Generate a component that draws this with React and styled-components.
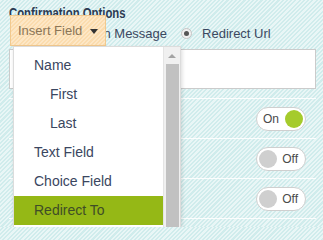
import styled, { createGlobalStyle } from "styled-components";

const GlobalStyle = createGlobalStyle`
  *, *::before, *::after {
    box-sizing: border-box;
  }
  html, body {
    margin: 0;
    padding: 0;
    height: 227px;
    overflow: hidden;
  }
  body {
    font-family: "Liberation Sans", Arial, sans-serif;
    background: repeating-linear-gradient(
      135deg,
      #e9f6f6 0px,
      #e9f6f6 1.5px,
      #d0ecec 1.5px,
      #d0ecec 3px
    );
  }
`;

const Panel = styled.div`
  position: relative;
  width: 323px;
  height: 227px;
  padding: 4px 7px 0 9px;
  overflow: hidden;
`;

const Title = styled.div`
  font-family: "Liberation Sans", Arial, sans-serif;
  font-weight: bold;
  font-size: 14px;
  line-height: 18px;
  height: 14px;
  color: #2b3b52;
  white-space: nowrap;
  transform: scaleX(0.81);
  transform-origin: left center;
`;

const RadioRow = styled.div`
  display: flex;
  align-items: center;
  gap: 14px;
  height: 31px;
  padding-left: 7px;
  font-size: 13px;
  color: #3b4860;
  white-space: nowrap;
`;

const RadioOption = styled.label`
  display: flex;
  align-items: center;
  gap: 10px;
`;

const Radio = styled.span`
  width: 11px;
  height: 11px;
  border-radius: 50%;
  border: 1px solid #c4c4c4;
  background: #f0f0f0;
  display: flex;
  align-items: center;
  justify-content: center;

  &::after {
    content: "";
    width: 5px;
    height: 5px;
    border-radius: 50%;
    background: ${(p) => (p.$checked ? "#555" : "transparent")};
  }
`;

const UrlInput = styled.div`
  height: 40px;
  background: #fff;
  border: 1px solid #cbcbcb;
`;

const Rows = styled.div`
  margin-top: 9px;
  border-top: 1px solid rgba(255, 255, 255, 0.9);
`;

const SettingRow = styled.div`
  height: 40px;
  display: flex;
  align-items: center;
  justify-content: flex-end;
  padding-right: 10px;
  border-bottom: 1px solid rgba(255, 255, 255, 0.9);
`;

const Toggle = styled.div`
  width: 50px;
  height: 24px;
  border-radius: 12px;
  background: #fff;
  border: 1px solid #cfcfcf;
  display: flex;
  flex-direction: ${(p) => (p.$on ? "row" : "row-reverse")};
  align-items: center;
  justify-content: space-between;
  padding: ${(p) => (p.$on ? "0 2px 0 6px" : "0 7px 0 2px")};
  font-size: 12px;
  color: #4a4a4a;

  &::after {
    content: "";
    width: 18px;
    height: 18px;
    border-radius: 50%;
    background: ${(p) => (p.$on ? "#a5cb2c" : "#cfcfcf")};
  }
`;

const InsertButton = styled.button`
  position: absolute;
  left: 10px;
  top: 15px;
  width: 96px;
  height: 31px;
  border: 1px solid #f2c98e;
  background: repeating-linear-gradient(
    135deg,
    #fde7c6 0px,
    #fde7c6 1.5px,
    #fbdcae 1.5px,
    #fbdcae 3px
  );
  font-family: "Liberation Sans", Arial, sans-serif;
  font-size: 13px;
  color: #8a7558;
  display: flex;
  align-items: center;
  padding: 0 0 0 7px;
  gap: 8px;
  cursor: pointer;
`;

const Caret = styled.span`
  width: 0;
  height: 0;
  border-left: 4px solid transparent;
  border-right: 4px solid transparent;
  border-top: 5px solid #333;
  margin-top: 1px;
`;

const Menu = styled.div`
  position: absolute;
  left: 13px;
  top: 46px;
  width: 168px;
  height: 200px;
  background: #fff;
  border: 1px solid #dcdcdc;
  box-shadow: 1px 2px 4px rgba(0, 0, 0, 0.15);
  display: flex;
`;

const MenuList = styled.div`
  flex: 1;
  padding-top: 4px;
`;

const MenuItem = styled.div`
  height: 29px;
  line-height: 29px;
  padding-left: ${(p) => (p.$nested ? "36px" : "20px")};
  font-size: 14px;
  color: ${(p) => (p.$active ? "#3f4d27" : "#3a4660")};
  background: ${(p) => (p.$active ? "#95b816" : "transparent")};
`;

const Scrollbar = styled.div`
  width: 17px;
  background: #f0f0f0;
  border-left: 1px solid #e4e4e4;
  display: flex;
  flex-direction: column;
  align-items: center;
  padding-top: 7px;
`;

const ScrollArrow = styled.span`
  width: 0;
  height: 0;
  border-left: 4px solid transparent;
  border-right: 4px solid transparent;
  border-bottom: 4px solid #a3a3a3;
`;

const ScrollThumb = styled.div`
  margin-top: 6px;
  width: 13px;
  flex: 1;
  background: #c1c1c1;
`;

export default function App() {
  const items = [
    { label: "Name" },
    { label: "First", nested: true },
    { label: "Last", nested: true },
    { label: "Text Field" },
    { label: "Choice Field" },
    { label: "Redirect To", active: true },
  ];

  return (
    <>
      <GlobalStyle />
      <Panel>
        <Title>Confirmation Options</Title>
        <RadioRow>
          <RadioOption>
            <Radio />
            Confirmation Message
          </RadioOption>
          <RadioOption>
            <Radio $checked />
            Redirect Url
          </RadioOption>
        </RadioRow>
        <UrlInput />
        <Rows>
          <SettingRow>
            <Toggle $on>On</Toggle>
          </SettingRow>
          <SettingRow>
            <Toggle>Off</Toggle>
          </SettingRow>
          <SettingRow>
            <Toggle>Off</Toggle>
          </SettingRow>
        </Rows>

        <InsertButton>
          Insert Field <Caret />
        </InsertButton>
        <Menu>
          <MenuList>
            {items.map((it) => (
              <MenuItem key={it.label} $nested={it.nested} $active={it.active}>
                {it.label}
              </MenuItem>
            ))}
          </MenuList>
          <Scrollbar>
            <ScrollArrow />
            <ScrollThumb />
          </Scrollbar>
        </Menu>
      </Panel>
    </>
  );
}
